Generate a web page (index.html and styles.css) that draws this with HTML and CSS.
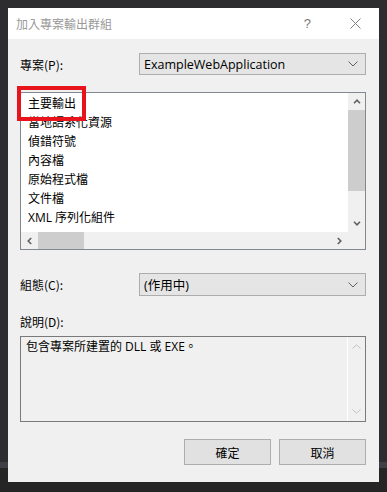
FILE: index.html
```html
<!doctype html>
<html lang="zh-Hant">
<head>
	<meta charset="UTF-8">
	<title>加入專案輸出群組</title>
	<link rel="stylesheet" href="styles.css">
</head>
<body>
	<div class="dialog">
	  <div class="dialog__title">
	    <span class="dialog__caption">加入專案輸出群組</span>
	    <span class="dialog__help">?</span>
	    <span class="dialog__close">
	      <svg width="11" height="11" viewBox="0 0 11 11"><path d="M0.5 0.5 L10.5 10.5 M10.5 0.5 L0.5 10.5" stroke="#808080" stroke-width="1" fill="none"/></svg>
	    </span>
	  </div>
	  <div class="dialog__body">
	    <div class="field">
	      <label class="field__label">專案(P):</label>
	      <div class="combo">
	        <span class="combo__text">ExampleWebApplication</span>
	        <svg class="combo__arrow" width="10" height="6" viewBox="0 0 10 6"><path d="M0.5 0.5 L5 5 L9.5 0.5" stroke="#606060" fill="none"/></svg>
	      </div>
	    </div>

	    <div class="listbox">
	      <div class="listbox__items">
	        <div class="listbox__item">主要輸出</div>
	        <div class="listbox__item">當地語系化資源</div>
	        <div class="listbox__item">偵錯符號</div>
	        <div class="listbox__item">內容檔</div>
	        <div class="listbox__item">原始程式檔</div>
	        <div class="listbox__item">文件檔</div>
	        <div class="listbox__item">XML 序列化組件</div>
	        <div class="listbox__item">已發行的項目</div>
	      </div>
	      <div class="vscroll">
	        <div class="scroll__btn"><svg width="8" height="5" viewBox="0 0 8 5"><path d="M1 4.2 L4 1.2 L7 4.2" stroke="#606060" stroke-width="1.6" fill="none"/></svg></div>
	        <div class="vscroll__thumb"></div>
	        <div class="scroll__track"></div>
	        <div class="scroll__btn"><svg width="8" height="5" viewBox="0 0 8 5"><path d="M1 0.8 L4 3.8 L7 0.8" stroke="#606060" stroke-width="1.6" fill="none"/></svg></div>
	      </div>
	      <div class="hscroll">
	        <div class="scroll__btn"><svg width="5" height="8" viewBox="0 0 5 8"><path d="M4.2 1 L1.2 4 L4.2 7" stroke="#606060" stroke-width="1.6" fill="none"/></svg></div>
	        <div class="hscroll__thumb"></div>
	        <div class="scroll__track"></div>
	        <div class="scroll__btn"><svg width="5" height="8" viewBox="0 0 5 8"><path d="M0.8 1 L3.8 4 L0.8 7" stroke="#606060" stroke-width="1.6" fill="none"/></svg></div>
	      </div>
	      <div class="listbox__corner"></div>
	      <div class="listbox__mark"></div>
	    </div>

	    <div class="field field--config">
	      <label class="field__label">組態(C):</label>
	      <div class="combo combo--tall">
	        <span class="combo__text">(作用中)</span>
	        <svg class="combo__arrow" width="10" height="6" viewBox="0 0 10 6"><path d="M0.5 0.5 L5 5 L9.5 0.5" stroke="#606060" fill="none"/></svg>
	      </div>
	    </div>

	    <div class="desc__label">說明(D):</div>
	    <div class="desc">
	      <div class="desc__text">包含專案所建置的 DLL 或 EXE。</div>
	      <div class="desc__scroll">
	        <svg width="9" height="5" viewBox="0 0 9 5"><path d="M0.5 4.5 L4.5 0.8 L8.5 4.5" stroke="#c2c2c2" fill="none"/></svg>
	        <svg width="9" height="5" viewBox="0 0 9 5"><path d="M0.5 0.5 L4.5 4.2 L8.5 0.5" stroke="#c2c2c2" fill="none"/></svg>
	      </div>
	    </div>

	    <div class="buttons">
	      <button class="button">確定</button>
	      <button class="button">取消</button>
	    </div>
	  </div>
	</div>
</body>
</html>
```

FILE: styles.css
```css
body {
  background: linear-gradient(to bottom, #2d2d30 0, #2d2d30 462px, #3f3f46 462px, #3f3f46 468px, #252526 468px);
  font-family: "Open Sans", "Noto Sans CJK TC", sans-serif;
  font-size: 12px;
  height: 492px;
  margin: 0;
  overflow: hidden;
  padding: 8px;
  box-sizing: border-box;
}

.dialog {
  background-color: #f0f0f0;
  box-sizing: border-box;
  display: flex;
  flex-direction: column;
  height: 474px;
  width: 371px;
}

.dialog__title {
  align-items: center;
  background-color: #fff;
  display: flex;
  flex: none;
  height: 31px;
  padding-left: 8px;
}

.dialog__caption {
  color: #999;
  flex: 1;
  font-family: "Noto Sans CJK TC", sans-serif;
}

.dialog__help {
  color: #777;
  font-family: "Liberation Sans", sans-serif;
  font-size: 13px;
  margin-right: 39px;
}

.dialog__close {
  display: flex;
  margin-right: 18px;
}

.dialog__body {
  display: flex;
  flex: 1;
  flex-direction: column;
  padding: 14px 13px 0 12px;
}

.field {
  align-items: center;
  display: flex;
  height: 22px;
}

.field--config {
  height: 23px;
  margin-top: 23px;
}

.field__label {
  color: #000;
  font-family: "Noto Sans CJK TC", sans-serif;
  width: 119px;
}

.combo {
  align-items: center;
  background-color: #e5e5e5;
  border: 1px solid #adadad;
  box-sizing: border-box;
  display: flex;
  flex: 1;
  height: 22px;
  padding: 0 4px 0 4px;
}

.combo--tall {
  height: 23px;
}

.combo__text {
  color: #000;
  flex: 1;
  font-family: "Open Sans", "Noto Sans CJK TC", sans-serif;
  font-size: 12.5px;
}

.combo__arrow {
  margin-right: 3px;
}

.listbox {
  background-color: #fff;
  border: 1px solid #828790;
  box-sizing: border-box;
  display: grid;
  grid-template-columns: 1fr 17px;
  grid-template-rows: 1fr 17px;
  height: 158px;
  margin-top: 17px;
  position: relative;
}

.listbox__items {
  overflow: hidden;
  padding-left: 7px;
  padding-top: 1px;
}

.listbox__item {
  color: #000;
  font-family: "Open Sans", "Noto Sans CJK TC", sans-serif;
  height: 19px;
  line-height: 19px;
  white-space: nowrap;
}

.listbox__item:last-child {
  padding-top: 2px;
}

.vscroll {
  background-color: #f0f0f0;
  display: flex;
  flex-direction: column;
}

.hscroll {
  background-color: #f0f0f0;
  display: flex;
}

.scroll__btn {
  align-items: center;
  display: flex;
  flex: none;
  height: 17px;
  justify-content: center;
  width: 17px;
}

.scroll__track {
  flex: 1;
}

.vscroll__thumb {
  background-color: #cdcdcd;
  height: 81px;
}

.hscroll__thumb {
  background-color: #cdcdcd;
  width: 46px;
}

.listbox__corner {
  background-color: #f0f0f0;
}

.listbox__mark {
  border: 4px solid #e8131b;
  box-sizing: border-box;
  height: 35px;
  left: -4px;
  position: absolute;
  top: -7px;
  width: 69px;
}

.desc__label {
  color: #000;
  font-family: "Noto Sans CJK TC", sans-serif;
  height: 16px;
  line-height: 16px;
  margin-top: 18px;
}

.desc {
  border: 1px solid #7a7a7a;
  box-sizing: border-box;
  display: flex;
  height: 86px;
  margin-top: 6px;
}

.desc__text {
  color: #000;
  flex: 1;
  font-family: "Open Sans", "Noto Sans CJK TC", sans-serif;
  line-height: 19px;
  padding: 0 5px;
}

.desc__scroll {
  align-items: center;
  border-left: 1px solid #fff;
  display: flex;
  flex-direction: column;
  justify-content: space-between;
  padding: 7px 0 7px;
  width: 17px;
}

.buttons {
  display: flex;
  gap: 8px;
  justify-content: flex-end;
  margin-top: 17px;
}

.button {
  background-color: #e1e1e1;
  border: 1px solid #adadad;
  color: #000;
  font-family: "Noto Sans CJK TC", sans-serif;
  font-size: 12px;
  height: 26px;
  padding: 0;
  width: 87px;
}
```
